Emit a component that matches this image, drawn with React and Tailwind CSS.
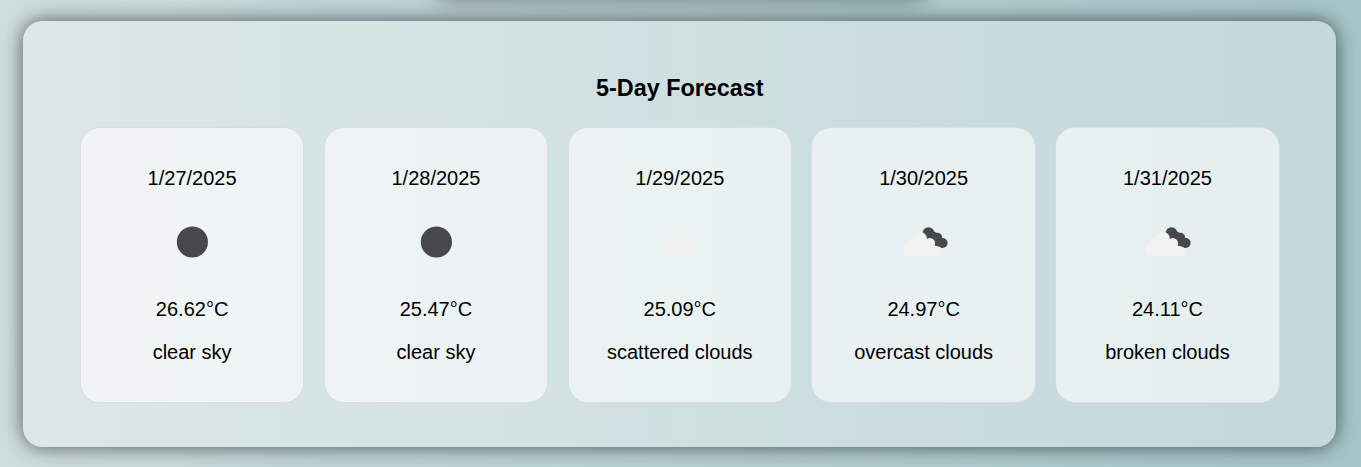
import React from "react";

const days = [
  { date: "1/27/2025", icon: "clear", temp: "26.62°C", text: "clear sky", tint: "bg-[linear-gradient(90deg,#f1f5f6,#f0f4f5_40%,#eff5f5_60%,#eef4f4)]" },
  { date: "1/28/2025", icon: "clear", temp: "25.47°C", text: "clear sky", tint: "bg-[linear-gradient(90deg,#eff5f5,#edf3f4_50%,#edf2f4)]" },
  { date: "1/29/2025", icon: "scattered", temp: "25.09°C", text: "scattered clouds", tint: "bg-[linear-gradient(90deg,#edf2f3,#ebf3f2_30%,#eaf3f2_60%,#e9f1f3_85%,#e9f0f3)]" },
  { date: "1/30/2025", icon: "broken", temp: "24.97°C", text: "overcast clouds", tint: "bg-[linear-gradient(90deg,#e9f0f3,#e8f0f2_55%,#e7eff1)]" },
  { date: "1/31/2025", icon: "broken", temp: "24.11°C", text: "broken clouds", tint: "bg-[linear-gradient(90deg,#e8f0f2,#e7f1ef_30%,#e6eff0_50%,#e6eef0)]" },
];

function WeatherIcon({ type }) {
  return (
    <svg viewBox="0 0 80 80" className="block size-20" aria-hidden="true">
      {type === "clear" && <circle cx="40.4" cy="40" r="15.6" fill="#48484a" />}
      {type === "scattered" && (
        <g fill="#f1f1f2">
          <circle cx="26" cy="46.2" r="6" />
          <circle cx="30.5" cy="41.5" r="6" />
          <circle cx="37.5" cy="36" r="6.8" />
          <circle cx="46.5" cy="40.8" r="6.5" />
          <circle cx="53.2" cy="46.8" r="5.4" />
          <path d="M30 39L47 37L53 46V52.2H26V46Z" />
        </g>
      )}
      {type === "broken" && (
        <g transform="translate(0.9 0)">
          <g fill="#48484a">
            <circle cx="43.6" cy="31.2" r="6" />
            <circle cx="52.4" cy="35.6" r="4.9" />
            <circle cx="57.7" cy="41" r="5" />
            <path d="M43 26.5L55 32.5L57.7 46L45 42Z" />
          </g>
          <g fill="#f2f2f2">
            <circle cx="24.2" cy="47.8" r="6.2" />
            <circle cx="28" cy="41.8" r="6" />
            <circle cx="35.3" cy="36.8" r="6.8" />
            <circle cx="45" cy="41.2" r="5.2" />
            <circle cx="52.5" cy="49.2" r="4.8" />
            <path d="M28 40L36 33L41 37L49 44L53 46V54H24V46Z" />
          </g>
        </g>
      )}
    </svg>
  );
}

export default function App() {
  return (
    <div className="relative flex h-[467px] w-full overflow-hidden bg-[linear-gradient(92deg,#cedddd_0%,#c8dad9_14%,#c3d7d9_19%,#c0d4da_25%,#bbd2d4_42%,#b2cdd0_62%,#acc9cd_78%,#a5c5c9_100%)] pt-[21px] pr-[25px] pb-5 pl-[23px] font-['Liberation_Sans',Arial,sans-serif] text-xl leading-[23px] text-black">
      <div className="absolute -top-10 left-[432px] h-10 w-[499px] rounded-[20px] shadow-[0_0_20px_rgba(0,0,0,0.4)]" />
      <section className="relative flex w-full flex-col rounded-[20px] bg-[linear-gradient(90deg,#dce7e6_0%,#d8e5e5_18%,#d3e3e2_35%,#d2e2e0_42%,#cfdfe3_46%,#cfe0e0_50%,#ccdfde_56%,#cbdde1_62%,#c8dbe0_75%,#c3d8dc_100%)] pt-[54px] pr-[56.3px] pl-[56.9px] shadow-[0_0_20px_rgba(0,0,0,0.6)]">
        <h3 className="text-center text-[23.4px] leading-[27px] font-bold">5-Day Forecast</h3>
        <div className="mt-[25px] grid grid-cols-5 gap-[19.4px]">
          {days.map((day) => (
            <article
              key={day.date}
              className={`flex h-[276px] flex-col items-center rounded-[20px] border border-[#ddd] pt-[39px] ${day.tint}`}
            >
              <p>{day.date}</p>
              <div className="mt-3">
                <WeatherIcon type={day.icon} />
              </div>
              <p className="mt-4">{day.temp}</p>
              <p className="mt-5">{day.text}</p>
            </article>
          ))}
        </div>
      </section>
    </div>
  );
}
